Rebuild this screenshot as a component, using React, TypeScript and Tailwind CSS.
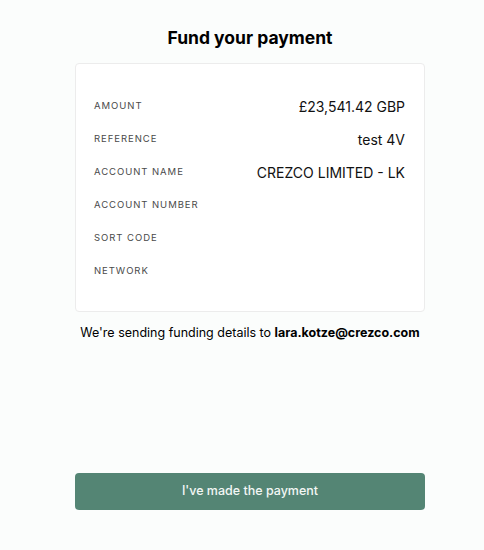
import React from "react";

const rows: [string, string][] = [
  ["Amount", "£23,541.42 GBP"],
  ["Reference", "test 4V"],
  ["Account name", "CREZCO LIMITED - LK"],
  ["Account number", ""],
  ["Sort code", ""],
  ["Network", ""],
];

export default function App() {
  return (
    <div
      className="min-h-[550px] w-full bg-[#fbfdfc] pl-[16px] text-[#111]"
      style={{ fontFamily: "Inter, 'Noto Sans', sans-serif" }}
    >
      <div className="mx-auto flex w-[350px] flex-col pt-[26px]">
        <h1 className="text-center text-[17.5px] font-bold leading-[24px] text-black">
          Fund your payment
        </h1>
        <div className="mt-[13px] flex h-[249px] flex-col justify-center rounded-[4px] border border-[#ececec] bg-white pl-[18px] pr-[19px] pt-[2px]">
          {rows.map(([label, value]) => (
            <div key={label} className="flex h-[33px] items-center justify-between">
              <span className="text-[9.5px] uppercase tracking-[0.1em] text-[#4a4a4a]">
                {label}
              </span>
              <span className="text-[14px] text-[#111]">{value}</span>
            </div>
          ))}
        </div>
        <p className="mt-[11px] whitespace-nowrap text-center text-[12.5px] leading-[20px] text-black">
          We're sending funding details to <span className="font-bold">lara.kotze@crezco.com</span>
        </p>
        <button className="mt-[130px] h-[37px] w-full rounded-[4px] bg-[#548574] text-[12.5px] font-medium text-[#f3f7f5]">
          I've made the payment
        </button>
      </div>
    </div>
  );
}
